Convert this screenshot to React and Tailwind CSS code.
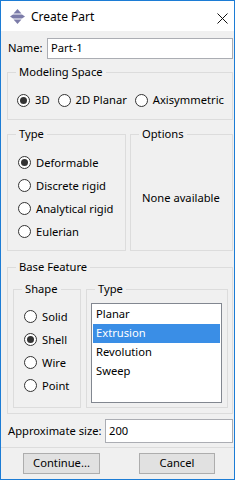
import React, { useState } from 'react';

const font = { fontFamily: '"Noto Sans", "Open Sans", Arial, sans-serif' };

function Radio({ checked, label, onClick, className = '' }) {
  return (
    <div onClick={onClick} className={`flex items-center gap-[5px] cursor-default ${className}`}>
      <span className="w-[13px] h-[13px] rounded-full border border-[#333333] bg-white flex items-center justify-center shrink-0">
        {checked && <span className="w-[7px] h-[7px] rounded-full bg-[#333333]" />}
      </span>
      <span className="leading-none">{label}</span>
    </div>
  );
}

function Group({ label, className = '', children }) {
  return (
    <div className={`relative border border-[#dcdcdc] ${className}`}>
      <span className="absolute top-[-9px] left-[8px] px-[3px] bg-[#f0f0f0] leading-[16px]">{label}</span>
      {children}
    </div>
  );
}

function PartIcon() {
  return (
    <svg width="15" height="15" viewBox="0 0 15 15">
      <polygon points="7.5,0 11.5,4.5 3.5,4.5" fill="#7b7ba8" />
      <polygon points="0,7.5 3,5.5 12,5.5 15,7.5 12,9.5 3,9.5" fill="#7b7ba8" />
      <polygon points="3.5,10.5 11.5,10.5 7.5,15" fill="#7b7ba8" />
    </svg>
  );
}

export default function App() {
  const [space, setSpace] = useState('3D');
  const [type, setType] = useState('Deformable');
  const [shape, setShape] = useState('Shell');
  const [feature, setFeature] = useState('Extrusion');

  return (
    <div className="w-[240px] h-[481px] bg-white text-[11.2px] text-black" style={font}>
      <div className="w-[235px] h-[480px] border border-[#1c7cd5] flex flex-col">
        {/* title bar */}
        <div className="h-[30px] bg-white flex items-center shrink-0">
          <div className="ml-[9px] mt-[1px]"><PartIcon /></div>
          <span className="ml-[6px] mt-[2px] text-[12px]">Create Part</span>
          <svg className="ml-auto mr-[6px] mt-[4px]" width="11" height="11" viewBox="0 0 11 11">
            <path d="M0.5 0.5 L10.5 10.5 M10.5 0.5 L0.5 10.5" stroke="#111" strokeWidth="1" />
          </svg>
        </div>

        {/* body */}
        <div className="flex-1 bg-[#f0f0f0] pl-[6px]">
          <div className="mt-[7px] h-[21px] flex items-center">
            <span className="w-[40px] pl-[1px]">Name:</span>
            <div className="w-[186px] h-[21px] border border-[#abadb3] bg-white flex items-center pl-[3px]">Part-1</div>
          </div>

          <Group label="Modeling Space" className="mt-[13px] w-[226px] h-[48px] flex items-center pt-[8px] pl-[9px]">
            <Radio checked={space === '3D'} label="3D" onClick={() => setSpace('3D')} />
            <Radio checked={space === '2D'} label="2D Planar" onClick={() => setSpace('2D')} className="ml-[8px]" />
            <Radio checked={space === 'Axi'} label="Axisymmetric" onClick={() => setSpace('Axi')} className="ml-[8px]" />
          </Group>

          <div className="mt-[14px] flex gap-[4px]">
            <Group label="Type" className="w-[119px] h-[117px] pt-[16px] pl-[10px]">
              {['Deformable', 'Discrete rigid', 'Analytical rigid', 'Eulerian'].map(t => (
                <Radio key={t} checked={type === t} label={t} onClick={() => setType(t)} className="h-[23px]" />
              ))}
            </Group>
            <Group label="Options" className="w-[103px] h-[117px] flex items-center pt-[11px] pl-[11px]">
              <span>None available</span>
            </Group>
          </div>

          <Group label="Base Feature" className="mt-[16px] w-[226px] h-[147px] pt-[21px] pl-[5px] flex gap-[5px]">
            <Group label="Shape" className="w-[68px] h-[119px] pt-[15px] pl-[10px]">
              {['Solid', 'Shell', 'Wire', 'Point'].map(s => (
                <Radio key={s} checked={shape === s} label={s} onClick={() => setShape(s)} className="h-[23px]" />
              ))}
            </Group>
            <Group label="Type" className="w-[142px] h-[119px] pt-[13px] pl-[4px]">
              <div className="w-[131px] h-[100px] border border-[#828790] bg-white pt-[1px] px-[1px]">
                {['Planar', 'Extrusion', 'Revolution', 'Sweep'].map(f => (
                  <div key={f} onClick={() => setFeature(f)}
                    className={`h-[19px] flex items-center pl-[3px] ${feature === f ? 'bg-[#3a8ee6] text-white' : ''}`}>
                    {f}
                  </div>
                ))}
              </div>
            </Group>
          </Group>

          <div className="mt-[5px] h-[24px] flex items-center">
            <span className="w-[98px] pl-[1px]">Approximate size:</span>
            <div className="w-[128px] h-[24px] border border-[#abadb3] bg-white flex items-center pl-[3px]">200</div>
          </div>

          <div className="mt-[4px] -ml-[6px] w-[233px] border-t border-[#dcdcdc]" />

          <div className="mt-[5px] flex">
            <button className="ml-[16px] w-[77px] h-[21px] bg-[#e1e1e1] border border-[#adadad]">Continue...</button>
            <button className="ml-[39px] w-[76px] h-[21px] bg-[#e1e1e1] border border-[#adadad]">Cancel</button>
          </div>
        </div>
      </div>
    </div>
  );
}
